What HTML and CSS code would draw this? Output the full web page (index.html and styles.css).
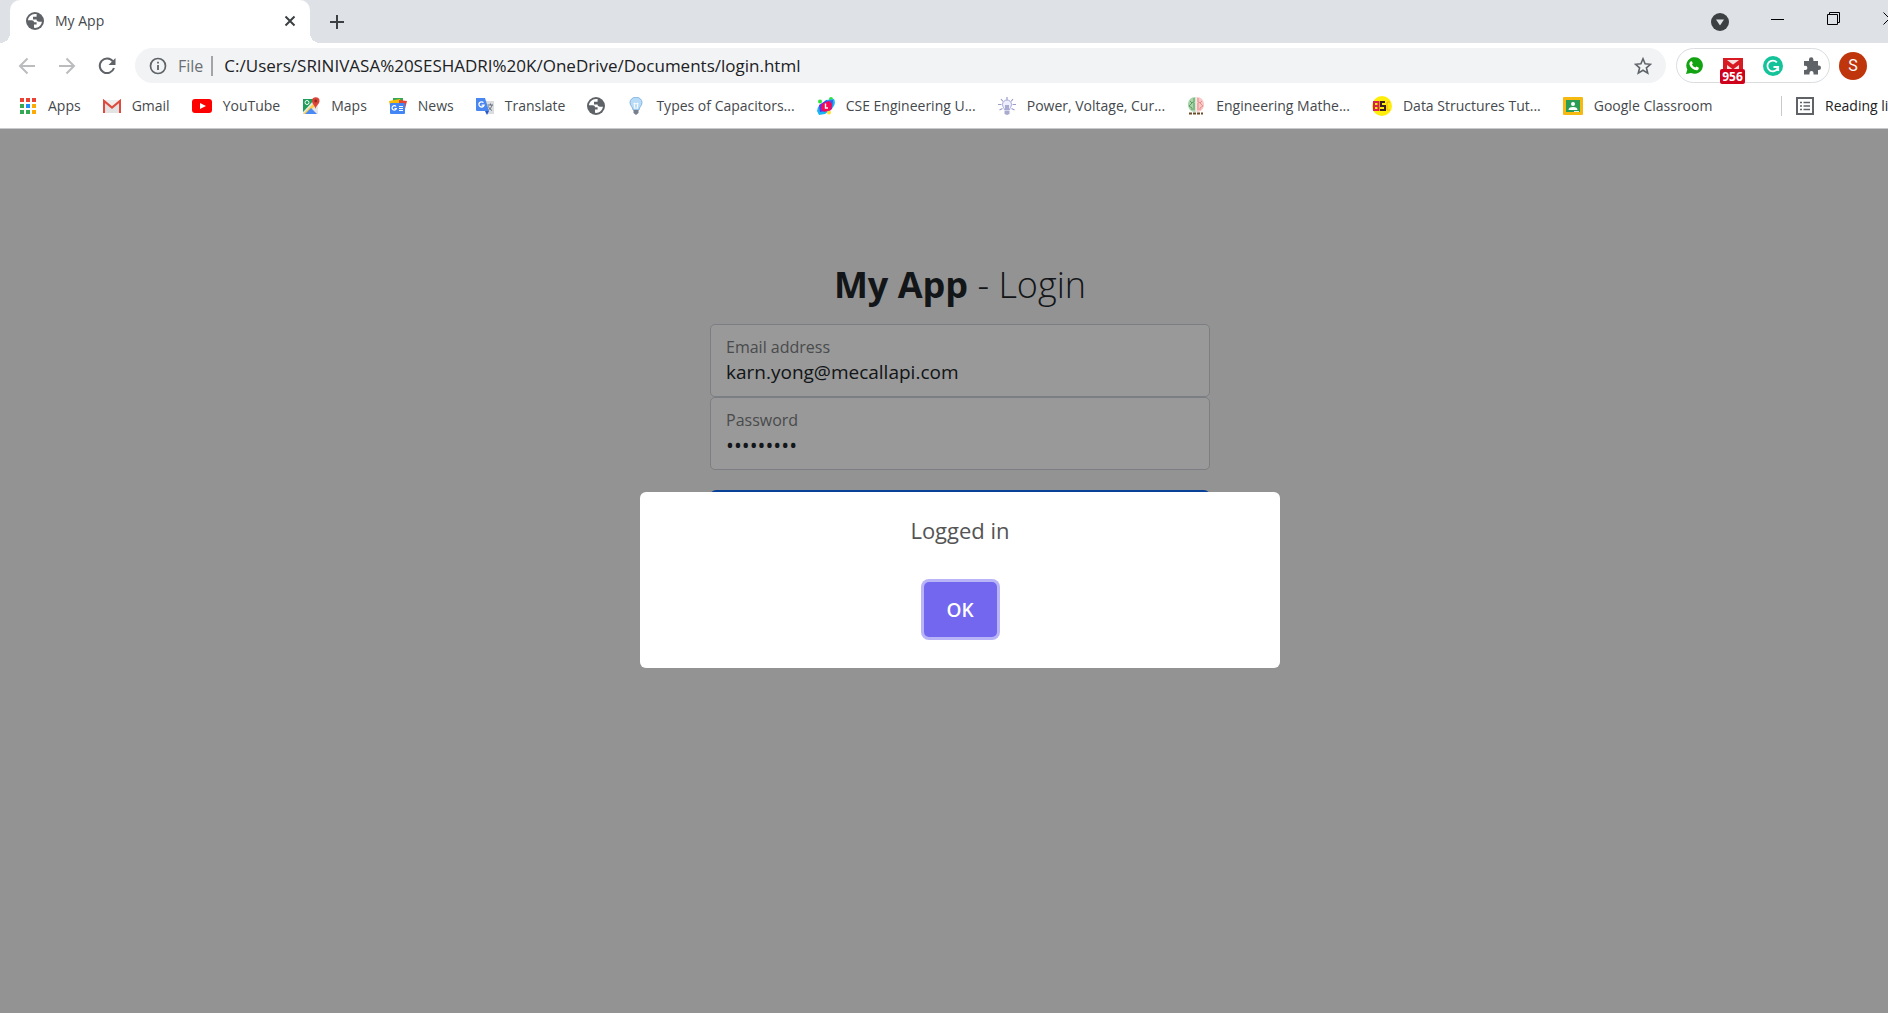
FILE: index.html
```html
<!DOCTYPE html>
<html lang="en">
<head>
  <meta charset="UTF-8" />
  <meta name="viewport" content="width=device-width, initial-scale=1.0" />
  <title>My App</title>
  <link rel="stylesheet" href="styles.css">
</head>
<body>
  <!-- shared globe icon -->
  <svg class="defs" aria-hidden="true">
    <symbol id="globe" viewBox="0 0 18 18">
      <circle cx="9" cy="9" r="9" fill="#5f6368"/>
      <path d="M10.6 2.1C6 1 2.200 4.600 2 8.200h3.600c1.700 0 2.400.8 2.400 2h2.600v2.300H8v3.300c3.600.6 7.400-2 7.900-6.100h-2.800c-1.700 0-2.500-.9-2.500-2.200H7V4.800h3.600z" fill="#fff"/>
    </symbol>
  </svg>

  <div class="window">
    <header class="browser">
      <div class="tab-strip">
        <div class="tab">
          <svg class="icon"><use href="#globe"/></svg>
          <span class="tab-title">My App</span>
          <button class="tab-close" aria-label="Close tab">
            <svg width="12" height="12" viewBox="0 0 12 12"><path d="M1.500 1.500l9 9m0-9l-9 9" stroke="#3c4043" stroke-width="2"/></svg>
          </button>
        </div>
        <button class="new-tab" aria-label="New tab">
          <svg width="16" height="16" viewBox="0 0 16 16"><path d="M8 1v14M1 8h14" stroke="#3c4043" stroke-width="2"/></svg>
        </button>
        <div class="window-controls">
          <button class="tab-search" aria-label="Search tabs">
            <svg width="18" height="18" viewBox="0 0 18 18"><circle cx="9" cy="9" r="9" fill="#3c4043"/><path d="M5 6.500h8L9 12.500z" fill="#dee1e6"/></svg>
          </button>
          <button aria-label="Minimize">
            <svg width="14" height="14" viewBox="0 0 14 14"><path d="M0 7.500h13" stroke="#000"/></svg>
          </button>
          <button aria-label="Restore">
            <svg width="14" height="14" viewBox="0 0 14 14"><path d="M.5 2.500h10v10H.5zM2.500 2.500v-2h10v10h-2" fill="none" stroke="#000"/></svg>
          </button>
          <button aria-label="Close">
            <svg width="14" height="14" viewBox="0 0 14 14"><path d="M.5.5l12 12m0-12l-12 12" stroke="#000"/></svg>
          </button>
        </div>
      </div>

      <div class="toolbar">
        <button class="nav-btn" aria-label="Back">
          <svg width="18" height="18" viewBox="0 0 18 18"><path d="M17 9H2M9.500 1.500L2 9l7.500 7.500" fill="none" stroke="#babcbe" stroke-width="2"/></svg>
        </button>
        <button class="nav-btn" aria-label="Forward">
          <svg width="18" height="18" viewBox="0 0 18 18"><path d="M1 9h15M8.500 1.500L16 9l-7.500 7.500" fill="none" stroke="#babcbe" stroke-width="2"/></svg>
        </button>
        <button class="nav-btn" aria-label="Reload">
          <svg width="18" height="18" viewBox="0 0 18 18"><path d="M15 4.500A7.300 7.300 0 1 0 16 11" fill="none" stroke="#5f6368" stroke-width="2"/><path d="M17.500 1v7h-7z" fill="#5f6368"/></svg>
        </button>
        <div class="address-bar">
          <svg width="18" height="18" viewBox="0 0 18 18"><circle cx="9" cy="9" r="7.500" fill="none" stroke="#5f6368" stroke-width="1.700"/><path d="M9 8v5M9 4.800v1.800" stroke="#5f6368" stroke-width="1.800"/></svg>
          <span class="scheme">File</span>
          <input class="url" type="text" aria-label="Address" value="C:/Users/SRINIVASA%20SESHADRI%20K/OneDrive/Documents/login.html">
          <button aria-label="Bookmark this page">
            <svg width="18" height="18" viewBox="0 0 18 18"><path d="M9 1.800l2.100 5 5.400.5-4.100 3.500 1.300 5.300L9 13.300l-4.700 2.800 1.300-5.300-4.100-3.500 5.400-.5z" fill="none" stroke="#5f6368" stroke-width="1.600"/></svg>
          </button>
        </div>
        <div class="extensions">
          <button aria-label="WhatsApp">
            <svg width="18" height="18" viewBox="0 0 18 18"><path d="M1 17l1.300-4.500A8.300 8.300 0 1 1 6 16z" fill="#12a312"/><path d="M5.600 4.600c.8-.8 1.300-.5 1.600.3l.6 1.400-.8 1.200c.8 1.500 1.900 2.500 3.400 3.100l1-1.100 2 1c.6.3.5.700.2 1.400-.6 1.400-2.300 1.700-4.200.9-2.500-1-4.500-3.300-5-5.500-.2-1.100.4-2.100 1.200-2.700z" fill="#fff"/></svg>
          </button>
          <button class="mail-ext" aria-label="Mail, 956 unread">
            <svg width="20" height="16" viewBox="0 0 20 16"><path d="M0 0h20v16H0z" fill="#f5dede"/><path d="M0 0h20v2H0z" fill="#d81b22"/><path d="M2 16V3l8 6 8-6v13" fill="none" stroke="#d81b22" stroke-width="4"/></svg>
            <span class="badge">956</span>
          </button>
          <button aria-label="Grammarly">
            <svg width="20" height="20" viewBox="0 0 20 20"><circle cx="10" cy="10" r="10" fill="#15c39a"/><path d="M13.800 6.300a5.400 5.400 0 1 0 .8 6.200M10.500 11h4.700v4" fill="none" stroke="#fff" stroke-width="1.800"/></svg>
          </button>
          <button aria-label="Extensions">
            <svg width="18" height="18" viewBox="0 0 18 18"><path d="M1 4h5V2.500a2.200 2.200 0 0 1 4.400 0V4H15v4.500h.800a2.200 2.200 0 0 1 0 4.400H15V17.500h-4.500V16a2 2 0 0 0-4 0v1.500H1V13h1.300a2 2 0 0 0 0-4.200H1z" fill="#5f6368"/></svg>
          </button>
        </div>
        <button class="avatar" aria-label="Profile">S</button>
      </div>

      <nav class="bookmarks" aria-label="Bookmarks">
        <a href="#">
          <svg class="icon" viewBox="0 0 18 18"><path d="M1 1h4v4H1zM7 1h4v4H7zM13 1h4v4h-4z" fill="#ea4335"/><path d="M1 7h4v4H1zM1 13h4v4H1zM7 13h4v4H7z" fill="#34a853"/><path d="M7 7h4v4H7z" fill="#1a8cff"/><path d="M13 7h4v4h-4zM13 13h4v4h-4z" fill="#fbab08"/></svg>
          Apps
        </a>
        <a href="#">
          <svg class="icon" viewBox="0 0 18 18"><path d="M1 3h16v13H1z" fill="#eee"/><path d="M3 16V5l6 5 6-5v11" fill="#e3e3e3"/><path d="M1 16V4l8 6.500L17 4v12" fill="none" stroke="#dd4b3e" stroke-width="2.200"/></svg>
          Gmail
        </a>
        <a href="#">
          <svg class="icon wide" viewBox="0 0 20 18"><rect y="2" width="20" height="14" rx="3" fill="#f00"/><path d="M8 6l6 3-6 3z" fill="#fff"/></svg>
          YouTube
        </a>
        <a href="#">
          <svg class="icon" viewBox="0 0 18 18"><path d="M1 2h15v15H1z" fill="#e8e8e8"/><path d="M1 2h12L1 15z" fill="#1e9e58"/><path d="M1 17L16 2v4L5 17z" fill="#fdd048"/><path d="M3 17l6-6 6 6z" fill="#4a8af4"/><circle cx="5" cy="5.500" r="2" fill="none" stroke="#fff"/><path d="M13.500 12C13 8.500 10 7 10 4a3.700 3.700 0 0 1 7.500 0c0 3-3.500 4.500-4 8z" fill="#dc4437"/><circle cx="13.700" cy="4" r="1.400" fill="#8c2820"/></svg>
          Maps
        </a>
        <a href="#">
          <svg class="icon" viewBox="0 0 18 18"><path d="M4 1h10v6H4z" fill="#34a853"/><path d="M0 4l11-2 2 7H1z" fill="#fbbc04"/><path d="M10 3l8 1-2 8h-6z" fill="#ea4335"/><rect x="1" y="6" width="15" height="11" rx="1" fill="#4285f4"/><path d="M7 9.500a2.200 2.200 0 1 0 .3 2.200H5.500M10 9.500h4M10 11.500h4M10 13.500h4" fill="none" stroke="#fff" stroke-width="1.200"/></svg>
          News
        </a>
        <a href="#">
          <svg class="icon" viewBox="0 0 18 18"><path d="M7 4h11v13H10z" fill="#dadce0"/><path d="M0 1h9l4 13H1q-1 0-1-1z" fill="#4a86f0"/><path d="M9 14h4l-2 4z" fill="#2a56c6"/><path d="M7.500 5.700a2.600 2.600 0 1 0 .5 2.500H5.600" fill="none" stroke="#fff" stroke-width="1.300"/><path d="M11.500 8H17m-2.500-1.500V8M16 8c-.5 2.500-2 4-3.500 5M12.500 9.500c.8 2 2 3 3.500 4" fill="none" stroke="#63707c"/></svg>
          Translate
        </a>
        <a href="#" aria-label="Untitled bookmark">
          <svg class="icon"><use href="#globe"/></svg>
        </a>
        <a href="#">
          <svg class="icon" viewBox="0 0 18 18"><path d="M6 13C6 10 3 9 3 5.500a6 5.300 0 0 1 12 0C15 9 12 10 12 13z" fill="#b8dcf8" stroke="#83b4e0"/><path d="M7 6l1 6m3-6l-1 6M7 6l2 1 2-1" fill="none" stroke="#fff"/><path d="M6.500 13h5v3L9 18l-2.500-2z" fill="#75808c"/></svg>
          Types of Capacitors...
        </a>
        <a href="#">
          <svg class="icon" viewBox="0 0 18 18"><circle cx="3" cy="4.500" r="2" fill="#2de43b"/><circle cx="14" cy="2" r="2" fill="#2de43b"/><path d="M1 10l8-7 8-1q3 6-4 11l-5 4-6 1-2-4z" fill="#15b6f5"/><path d="M2 8l8-5-2 11-5 1z" fill="#652ce8"/><path d="M9 4l7-1-1 9-4 3z" fill="#4255e8"/><circle cx="12" cy="15.500" r="2" fill="#ffe52b"/><path d="M5 7l7-3 3 3-1 6-7 2-3-3z" fill="#f90754"/><path d="M8.500 6.500V11H11" fill="none" stroke="#fff" stroke-width="1.400"/></svg>
          CSE Engineering U...
        </a>
        <a href="#">
          <svg class="icon" viewBox="0 0 18 18"><path d="M9 0v3M3 2l2 2.500M15 2l-2 2.500M0 7.500h3.500M14.500 7.500H18M1.500 13l3-1.500M16.500 13l-3-1.500" stroke="#9a9ccc" stroke-width="1.200"/><path d="M6.500 13C6.500 11 4.500 10 4.500 7.500a4.500 4.500 0 0 1 9 0c0 2.500-2 3.500-2 5.500z" fill="#eef" stroke="#a8aad8"/><path d="M7 8h4v5H7zM6.500 14h5v3l-2.500 1-2.500-1z" fill="#a8aad0"/></svg>
          Power, Voltage, Cur...
        </a>
        <a href="#">
          <svg class="icon" viewBox="0 0 18 18"><path d="M8.500 0C4 0 1 3 1 7.500S4 15 8.500 15z" fill="#a9d3ab"/><path d="M9.500 0C14 0 17 3 17 7.500S14 15 9.500 15z" fill="#f7c8c6"/><path d="M7 1v4L4 6m3 0v7M3 4l2 2-3 3 3 2v2" fill="none" stroke="#58a05d"/><path d="M11 1v4l3 1m-3 0v7m4-9l-2 2 3 3-3 2v2" fill="none" stroke="#e58e8c"/><path d="M2 16.500h14" stroke="#6b4a25" stroke-width="2" stroke-dasharray="3 1"/></svg>
          Engineering Mathe...
        </a>
        <a href="#">
          <svg class="icon large" viewBox="0 0 20 20"><circle cx="10" cy="10" r="10" fill="#ffed0c"/><path d="M2 6h4.500v8H2zM2 10h5" fill="none" stroke="#d9214e" stroke-width="2"/><path d="M13 6H9v4h4v4H8" fill="none" stroke="#3b2020" stroke-width="2"/><path d="M18 6h-3v8h3" fill="none" stroke="#f4b214"/></svg>
          Data Structures Tut...
        </a>
        <a href="#">
          <svg class="icon wide" viewBox="0 0 20 18"><rect width="20" height="18" rx="1" fill="#f6b90f"/><path d="M3 3h14v12H3z" fill="#2a9c56"/><circle cx="10" cy="7" r="2" fill="#fff"/><path d="M5.500 13q0-3 4.500-3t4.500 3z" fill="#fff"/><path d="M11 14h5v1h-5z" fill="#dff0e5"/></svg>
          Google Classroom
        </a>
        <a class="reading-list" href="#">
          <svg class="icon" viewBox="0 0 18 18"><path d="M1 1h16v16H1z" fill="none" stroke="#5f6368" stroke-width="2"/><path d="M4 5.500h2M4 9h2M4 12.500h2M7.500 5.500H14M7.500 9H14M7.500 12.500H14" stroke="#5f6368" stroke-width="1.600"/></svg>
          Reading list
        </a>
      </nav>
    </header>

    <main class="page">
      <form class="form-signin">
        <h1><b>My App</b> - Login</h1>
        <div class="form-floating">
          <label for="username">Email address</label>
          <input type="email" id="username" value="karn.yong@mecallapi.com">
        </div>
        <div class="form-floating">
          <label for="password">Password</label>
          <input type="password" id="password" value="mecallapi">
        </div>
        <button class="btn-login" type="button" aria-label="Login"></button>
      </form>

      <div class="overlay">
        <div class="popup" role="dialog" aria-labelledby="popupText">
          <div class="popup-text" id="popupText">Logged in</div>
          <button class="popup-ok" type="button">OK</button>
        </div>
      </div>
    </main>
  </div>
</body>
</html>
```
FILE: styles.css
```css
* {
  box-sizing: border-box;
}

html, body {
  margin: 0;
  height: 100%;
}

body {
  font-family: "Segoe UI", "Open Sans", "Noto Sans", sans-serif;
  overflow: hidden;
}

button {
  border: 0;
  padding: 0;
  background: none;
  font-family: inherit;
  cursor: pointer;
}

svg {
  display: block;
  flex: none;
}

.defs {
  display: none;
}

/* the window runs a little past the right edge of the screen */
.window {
  display: flex;
  flex-direction: column;
  height: 100%;
  margin-right: -32px;
}

.browser {
  background: #fff;
  border-bottom: 1px solid #c8cacd;
}

/* tabs */
.tab-strip {
  display: flex;
  align-items: center;
  height: 43px;
  padding-left: 10px;
  background: #dee1e6;
}

.tab {
  position: relative;
  display: flex;
  align-items: center;
  width: 300px;
  height: 43px;
  padding: 0 14px 2px 16px;
  background: #fff;
  border-radius: 10px 10px 0 0;
}

.tab::before,
.tab::after {
  content: "";
  position: absolute;
  bottom: 0;
  width: 10px;
  height: 10px;
}

.tab::before {
  right: 100%;
  background: radial-gradient(circle at 0 0, #dee1e6 10px, #fff 10px);
}

.tab::after {
  left: 100%;
  background: radial-gradient(circle at 100% 0, #dee1e6 10px, #fff 10px);
}

.icon {
  width: 18px;
  height: 18px;
}

.icon.wide {
  width: 20px;
}

.icon.large {
  width: 20px;
  height: 20px;
}

.tab-title {
  flex: 1;
  margin-left: 11px;
  font-size: 14px;
  color: #45494d;
}

.new-tab {
  margin-left: 19px;
}

.window-controls {
  display: flex;
  align-items: center;
  align-self: flex-start;
  gap: 42px;
  height: 37px;
  margin: 0 23px 0 auto;
}

.tab-search {
  padding-top: 6px;
}

/* toolbar */
.toolbar {
  display: flex;
  align-items: center;
  padding: 5px 53px 4px 18px;
}

.nav-btn {
  margin-right: 22px;
}

.address-bar {
  display: flex;
  flex: 1;
  align-items: center;
  height: 35px;
  padding: 0 14px;
  margin: 0 10px 0 -3px;
  background: #f1f3f4;
  border-radius: 18px;
}

.scheme {
  margin-left: 11px;
  padding-right: 8px;
  border-right: 2px solid #a2a5a8;
  font-size: 16px;
  line-height: 20px;
  color: #6b6f74;
}

.url {
  flex: 1;
  padding: 0 0 0 11px;
  border: 0;
  outline: 0;
  background: none;
  font-family: inherit;
  font-size: 17px;
  color: #202124;
}

.extensions {
  display: flex;
  align-items: center;
  gap: 20px;
  height: 35px;
  padding: 0 8px;
  margin-right: 9px;
  border: 1px solid #dadce0;
  border-radius: 18px;
}

.mail-ext {
  position: relative;
}

.badge {
  position: absolute;
  top: 11px;
  left: -3px;
  width: 25px;
  background: #d0021b;
  border-radius: 2px;
  font-size: 12px;
  font-weight: 700;
  line-height: 15px;
  color: #fff;
}

.avatar {
  width: 28px;
  height: 28px;
  background: #bf360c;
  border-radius: 50%;
  font-family: Roboto, sans-serif;
  font-size: 16px;
  color: #fff;
}

/* bookmarks */
.bookmarks {
  display: flex;
  align-items: center;
  gap: 22px;
  height: 41px;
  padding: 0 20px 4px 19px;
}

.bookmarks a {
  display: flex;
  align-items: center;
  gap: 11px;
  font-size: 14px;
  line-height: 20px;
  color: #45494d;
  text-decoration: none;
  white-space: nowrap;
}

.bookmarks .reading-list {
  margin-left: auto;
  padding-left: 14px;
  border-left: 1px solid #c8cacd;
  color: #202124;
}

/* page */
.page {
  position: relative;
  flex: 1;
  padding: 133px 0 40px;
  background: #f5f5f5;
}

.form-signin {
  width: 500px;
  margin: 0 auto;
}

.form-signin h1 {
  margin: 0 0 17px;
  font-size: 36px;
  font-weight: 300;
  line-height: 45px;
  color: #212529;
  text-align: center;
}

.form-signin h1 b {
  font-weight: 700;
}

.form-floating {
  display: flex;
  flex-direction: column;
  height: 73px;
  padding: 10px 15px;
  background: #fff;
  border: 1px solid #ced4da;
  border-radius: 5px;
}

.form-floating label {
  font-size: 16px;
  line-height: 24px;
  color: #7a7d80;
}

.form-floating input {
  height: 26px;
  padding: 0;
  border: 0;
  outline: 0;
  background: none;
  font-family: inherit;
  font-size: 19px;
  color: #212529;
}

.form-floating input[type="password"] {
  font-size: 21px;
}

.btn-login {
  width: 100%;
  height: 60px;
  margin-top: 20px;
  background: #0d6efd;
  border-radius: 6px;
}

/* popup */
.overlay {
  position: absolute;
  inset: 0;
  display: flex;
  align-items: center;
  justify-content: center;
  padding-top: 18px;
  background: rgba(0, 0, 0, 0.4);
}

.popup {
  display: flex;
  flex-direction: column;
  align-items: center;
  width: 640px;
  padding: 20px 20px 31px;
  background: #fff;
  border-radius: 6px;
}

.popup-text {
  font-size: 22px;
  line-height: 36px;
  color: #545454;
}

.popup-ok {
  width: 73px;
  height: 55px;
  margin-top: 34px;
  background: #7367f0;
  border-radius: 5px;
  box-shadow: 0 0 0 3px #b9b3f8;
  font-size: 19px;
  font-weight: 600;
  color: #fff;
}
```
